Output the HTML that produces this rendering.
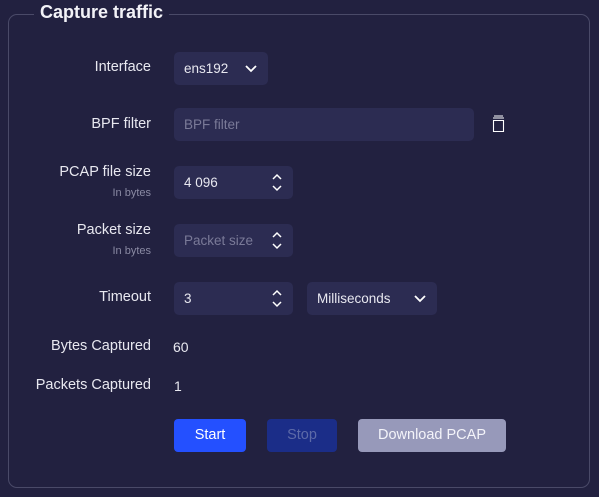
<!DOCTYPE html><html><head><style>
body{margin:0;width:599px;height:497px;background:#222140;font-family:"Liberation Sans",sans-serif;color:#e8e8f0;position:relative;overflow:hidden}
.a{position:absolute}
.box{left:8px;top:14px;width:582px;height:474px;border:1px solid #4a4a68;border-radius:9px;box-sizing:border-box}
.title{left:34px;top:2px;padding:0 6px;background:#222140;font-weight:bold;font-size:18px;color:#f2f2f7}
.lbl{right:448px;font-size:14.5px;text-align:right;white-space:nowrap}
.sub{right:448px;font-size:11px;color:#8a8aa3}
.in{background:#2c2c52;border-radius:5px;height:33px;font-size:13.5px;line-height:33px;padding-left:10px;box-sizing:border-box;overflow:hidden;white-space:nowrap}
.ph{color:#7a7a98}
.ic{position:absolute;right:10px;top:0;background:#2c2c52}
.btn{height:33px;top:419px;border-radius:4px;font-size:14.5px;line-height:33px;text-align:center}
</style></head><body>
<div class="a box"></div>
<div class="a title">Capture traffic</div>

<div class="a lbl" style="top:59px">Interface</div>
<div class="a in" style="left:174px;top:52px;width:94px">ens192<svg class="ic" width="14" height="33" viewBox="0 0 14 33"><path d="M2 14l5 5 5-5" fill="none" stroke="#fff" stroke-width="1.8"/></svg></div>

<div class="a lbl" style="top:116px">BPF filter</div>
<div class="a in ph" style="left:174px;top:108px;width:300px">BPF filter</div>
<svg class="a" style="left:491px;top:115px" width="15" height="18" viewBox="0 0 15 18"><path d="M3 1h9M2 3h11M2.5 5.5h10v11h-10z" fill="none" stroke="#fff" stroke-width="1.1"/></svg>

<div class="a lbl" style="top:164px">PCAP file size</div>
<div class="a sub" style="top:187px">In bytes</div>
<div class="a in" style="left:174px;top:166px;width:119px">4 096<svg class="ic" width="12" height="33" viewBox="0 0 12 33"><path d="M2 13l4-4 4 4M2 20l4 4 4-4" fill="none" stroke="#fff" stroke-width="1.5"/></svg></div>

<div class="a lbl" style="top:222px">Packet size</div>
<div class="a sub" style="top:245px">In bytes</div>
<div class="a in ph" style="left:174px;top:224px;width:119px">Packet size<svg class="ic" width="18" height="33" viewBox="-3 0 18 33" style="right:7px"><path d="M2 13l4-4 4 4M2 20l4 4 4-4" fill="none" stroke="#fff" stroke-width="1.5"/></svg></div>

<div class="a lbl" style="top:289px">Timeout</div>
<div class="a in" style="left:174px;top:282px;width:119px">3<svg class="ic" width="12" height="33" viewBox="0 0 12 33"><path d="M2 13l4-4 4 4M2 20l4 4 4-4" fill="none" stroke="#fff" stroke-width="1.5"/></svg></div>
<div class="a in" style="left:307px;top:282px;width:130px">Milliseconds<svg class="ic" width="14" height="33" viewBox="0 0 14 33"><path d="M2 14l5 5 5-5" fill="none" stroke="#fff" stroke-width="1.8"/></svg></div>

<div class="a lbl" style="top:338px">Bytes Captured</div>
<div class="a" style="left:173px;top:339px;font-size:14px">60</div>
<div class="a lbl" style="top:377px">Packets Captured</div>
<div class="a" style="left:174px;top:378px;font-size:14px">1</div>

<div class="a btn" style="left:174px;width:72px;background:#2450ff;color:#fff">Start</div>
<div class="a btn" style="left:267px;width:70px;background:#1b2d88;color:#5d6aa8">Stop</div>
<div class="a btn" style="left:358px;width:148px;background:#9799ba;color:#f4f4fa">Download PCAP</div>
</body></html>
